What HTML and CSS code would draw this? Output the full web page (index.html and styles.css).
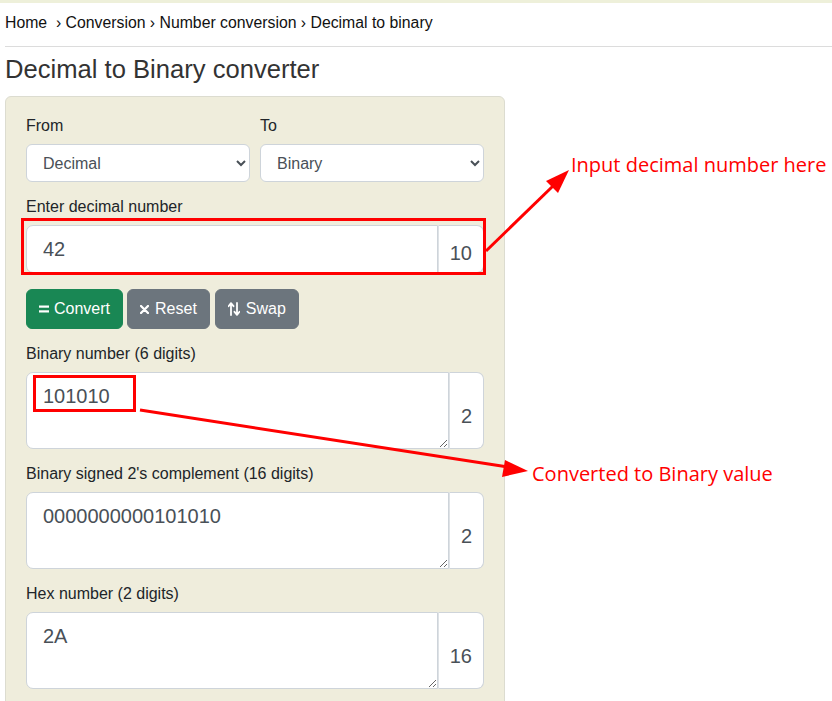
FILE: index.html
```html
<!DOCTYPE html>
<html lang="en">
<head>
<meta charset="utf-8">
<title>Decimal to Binary converter</title>
<link rel="stylesheet" href="styles.css">
</head>
<body>
<div class="topbar"></div>
<main class="page">
  <nav class="crumbs">Home &nbsp;› Conversion › Number conversion › Decimal to binary</nav>
  <hr class="rule">
  <h1 class="title">Decimal to Binary converter</h1>
  <form class="panel">
    <div class="row2 group">
      <div>
        <label class="lbl">From</label>
        <select class="sel"><option>Decimal</option></select>
      </div>
      <div>
        <label class="lbl">To</label>
        <select class="sel"><option>Binary</option></select>
      </div>
    </div>
    <div class="group">
      <label class="lbl">Enter decimal number</label>
      <div class="igroup">
        <input class="field big" value="42">
        <span class="addon addon-in">10</span>
      </div>
    </div>
    <div class="btns">
      <button type="button" class="btn green"><svg class="ico ico-eq" width="10" height="8" viewBox="0 0 10 8"><rect x="0" y="0.5" width="10" height="2.2" fill="#fff"/><rect x="0" y="5.3" width="10" height="2.2" fill="#fff"/></svg>Convert</button>
      <button type="button" class="btn grey"><svg class="ico" width="9" height="9" viewBox="0 0 9 9"><path d="M1 1L8 8M8 1L1 8" stroke="#fff" stroke-width="2.3" stroke-linecap="round"/></svg>Reset</button>
      <button type="button" class="btn grey"><svg class="ico" width="12" height="14" viewBox="0 0 12 14"><path d="M3 13V2M0.5 4.2L3 1.2L5.5 4.2M9 1V12M6.5 9.8L9 12.8L11.5 9.8" stroke="#fff" stroke-width="1.8" fill="none" stroke-linecap="round" stroke-linejoin="round"/></svg>Swap</button>
    </div>
    <div class="group">
      <label class="lbl">Binary number (6 digits)</label>
      <div class="igroup">
        <textarea class="field area" readonly>101010</textarea>
        <span class="addon">2</span>
      </div>
    </div>
    <div class="group">
      <label class="lbl">Binary signed 2's complement (16 digits)</label>
      <div class="igroup">
        <textarea class="field area" readonly>0000000000101010</textarea>
        <span class="addon">2</span>
      </div>
    </div>
    <div class="group">
      <label class="lbl">Hex number (2 digits)</label>
      <div class="igroup">
        <textarea class="field area" readonly>2A</textarea>
        <span class="addon">16</span>
      </div>
    </div>
  </form>
</main>
<svg class="notes" width="832" height="701" viewBox="0 0 832 701">
  <rect x="22.5" y="219.5" width="462" height="54" fill="none" stroke="#f00" stroke-width="3"/>
  <rect x="34.5" y="376.5" width="100" height="34" fill="none" stroke="#f00" stroke-width="3"/>
  <line x1="486" y1="251" x2="553" y2="186" stroke="#f00" stroke-width="3"/>
  <polygon points="569,170 546,181 558,193" fill="#f00"/>
  <line x1="140" y1="410" x2="508" y2="467" stroke="#f00" stroke-width="3"/>
  <polygon points="528,471 505,460 502,477" fill="#f00"/>
  <text class="note" x="571" y="172">Input decimal number here</text>
  <text class="note" x="532" y="481">Converted to Binary value</text>
</svg>
</body>
</html>
```
FILE: styles.css
```css
html, body {
  margin: 0;
  padding: 0;
  background: #fff;
}
body {
  font-family: "Liberation Sans", Arial, sans-serif;
  color: #212529;
  font-size: 16px;
  line-height: 1.5;
  position: relative;
  overflow: hidden;
  height: 701px;
}
.topbar {
  height: 3px;
  background: #eef0da;
}
.page {
  padding: 0 0 0 5px;
}
.crumbs {
  padding-top: 8px;
  line-height: 24px;
  font-size: 15.8px;
  color: #111;
  white-space: nowrap;
}
.rule {
  margin: 11px 0 0 0;
  border: 0;
  border-top: 1px solid #dcdcdc;
  height: 0;
}
.title {
  margin: 7px 0 11px 0;
  font-size: 25.6px;
  font-weight: normal;
  line-height: 31px;
  color: #333;
}
.panel {
  box-sizing: border-box;
  width: 500px;
  background: #efeddc;
  border: 1px solid #dcdcd0;
  border-radius: 6px;
  padding: 17px 20px 20px 20px;
  height: 640px;
}
.group {
  margin-bottom: 13px;
}
.row2 {
  display: grid;
  grid-template-columns: 1fr 1fr;
  column-gap: 10px;
}
.lbl {
  display: block;
  line-height: 24px;
  margin-bottom: 6px;
}
.sel {
  box-sizing: border-box;
  display: block;
  width: 100%;
  height: 38px;
  font-family: "Liberation Sans", Arial, sans-serif;
  font-size: 16px;
  color: #495057;
  background: #fff;
  border: 1px solid #ced4da;
  border-radius: 6px;
  padding: 6px 4px 6px 12px;
}
.igroup {
  display: flex;
  align-items: stretch;
}
.field {
  box-sizing: border-box;
  flex: 1;
  min-width: 0;
  font-family: "Liberation Sans", Arial, sans-serif;
  font-size: 20px;
  line-height: 30px;
  color: #495057;
  background: #fff;
  border: 1px solid #ced4da;
  border-radius: 7px 0 0 7px;
  padding: 8px 16px;
  margin: 0;
}
.big {
  height: 48px;
}
.area {
  height: 77px;
  resize: vertical;
}
.addon {
  box-sizing: border-box;
  display: flex;
  align-items: center;
  padding: 10px 11px 0 11px;
  font-size: 20px;
  color: #495057;
  background: #fff;
  border: 1px solid #ced4da;
  border-left: 1px solid #dee2e6;
  border-radius: 0 7px 7px 0;
}
.addon-in {
  padding-top: 8px;
}
.btns {
  display: flex;
  gap: 4px;
  margin: 16px 0 13px 0;
}
.btn {
  box-sizing: border-box;
  display: inline-flex;
  align-items: center;
  height: 40px;
  padding: 0 12px;
  font-family: "Liberation Sans", Arial, sans-serif;
  font-size: 16px;
  color: #fff;
  border: 1px solid transparent;
  border-radius: 6px;
}
.btn + .btn + .btn {
  margin-left: 1px;
}
.green {
  background: #198754;
  border-color: #198754;
}
.grey {
  background: #6c757d;
  border-color: #6c757d;
}
.ico {
  margin-right: 6px;
}
.ico-eq {
  margin-right: 5px;
}
.notes {
  position: absolute;
  left: 0;
  top: 0;
  pointer-events: none;
}
.note {
  font-family: "Open Sans", sans-serif;
  font-size: 20px;
  fill: #f00;
}
```
